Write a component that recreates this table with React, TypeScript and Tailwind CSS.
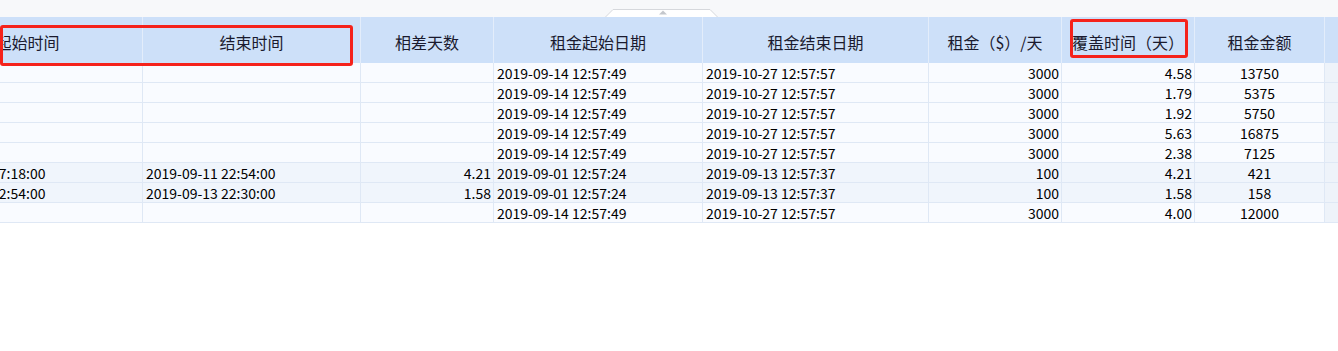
import React from 'react';

type Align = 'left' | 'right' | 'center';

const columns: { title: string; width: string; align: Align }[] = [
  { title: '起始时间', width: 'w-[230px]', align: 'left' },
  { title: '结束时间', width: 'w-[218px]', align: 'left' },
  { title: '相差天数', width: 'w-[133px]', align: 'right' },
  { title: '租金起始日期', width: 'w-[209px]', align: 'left' },
  { title: '租金结束日期', width: 'w-[226px]', align: 'left' },
  { title: '租金（$）/天', width: 'w-[133px]', align: 'right' },
  { title: '覆盖时间（天）', width: 'w-[133px]', align: 'right' },
  { title: '租金金额', width: 'w-[130px]', align: 'center' },
  { title: '', width: 'w-[120px]', align: 'left' },
];

const A = '2019-09-14 12:57:49';
const B = '2019-10-27 12:57:57';

const rows: { cells: string[]; hl?: boolean }[] = [
  { cells: ['', '', '', A, B, '3000', '4.58', '13750', ''] },
  { cells: ['', '', '', A, B, '3000', '1.79', '5375', ''] },
  { cells: ['', '', '', A, B, '3000', '1.92', '5750', ''] },
  { cells: ['', '', '', A, B, '3000', '5.63', '16875', ''] },
  { cells: ['', '', '', A, B, '3000', '2.38', '7125', ''] },
  {
    cells: ['2019-09-07 17:18:00', '2019-09-11 22:54:00', '4.21', '2019-09-01 12:57:24', '2019-09-13 12:57:37', '100', '4.21', '421', ''],
    hl: true,
  },
  {
    cells: ['2019-09-11 22:54:00', '2019-09-13 22:30:00', '1.58', '2019-09-01 12:57:24', '2019-09-13 12:57:37', '100', '1.58', '158', ''],
    hl: true,
  },
  { cells: ['', '', '', A, B, '3000', '4.00', '12000', ''] },
];

const alignClass = (a: Align) =>
  a === 'right' ? 'justify-end pr-[2px]' : a === 'center' ? 'justify-center' : 'justify-start pl-[3px]';

export default function App() {
  return (
    <div
      className="relative w-[1338px] h-[351px] overflow-hidden bg-white text-black"
      style={{ fontFamily: '"Microsoft YaHei", "Noto Sans CJK SC", "Noto Sans", sans-serif' }}
    >
      {/* 顶部工具条 */}
      <div className="relative h-[17px] bg-[#f7f8fa]">
        <div className="absolute left-[605px] top-[9px] w-[113px] h-[8px]">
          <svg width="113" height="8" viewBox="0 0 113 8">
            <path d="M0.5 8 L8 0.5 L105 0.5 L112.5 8" fill="#ffffff" stroke="#d6d8dc" />
            <path d="M54 5.5 L58 1.5 L62 5.5 Z" fill="#c4c7cc" />
          </svg>
        </div>
      </div>

      {/* 表格 */}
      <div className="ml-[-87px] w-max">
        <div className="flex h-[46px] bg-[#cde0f9]">
          {columns.map((c, i) => (
            <div
              key={i}
              className={`${c.width} shrink-0 flex items-center justify-center pt-[3px] border-r border-[#e3edfb] text-[16px] text-[#1a1a2e] whitespace-nowrap`}
            >
              {c.title}
            </div>
          ))}
        </div>
        {rows.map((r, ri) => (
          <div key={ri} className={`flex h-[20px] border-b border-[#dfe8f5] ${r.hl ? 'bg-[#f0f5fc]' : 'bg-[#f9fbff]'}`}>
            {r.cells.map((v, ci) => (
              <div
                key={ci}
                className={`${columns[ci].width} shrink-0 flex items-center ${alignClass(columns[ci].align)} border-r border-[#dfe8f5] text-[14px] leading-none whitespace-nowrap ${ci === 8 ? 'bg-[#eef3fa]' : ''}`}
              >
                {v}
              </div>
            ))}
          </div>
        ))}
      </div>

      {/* 标注框 */}
      <div className="absolute left-0 top-[25px] w-[353px] h-[41px] border-[3px] border-[#f5221b] rounded-[3px]" />
      <div className="absolute left-[1070px] top-[19px] w-[118px] h-[39px] border-[3px] border-[#f5221b] rounded-[3px]" />
    </div>
  );
}
